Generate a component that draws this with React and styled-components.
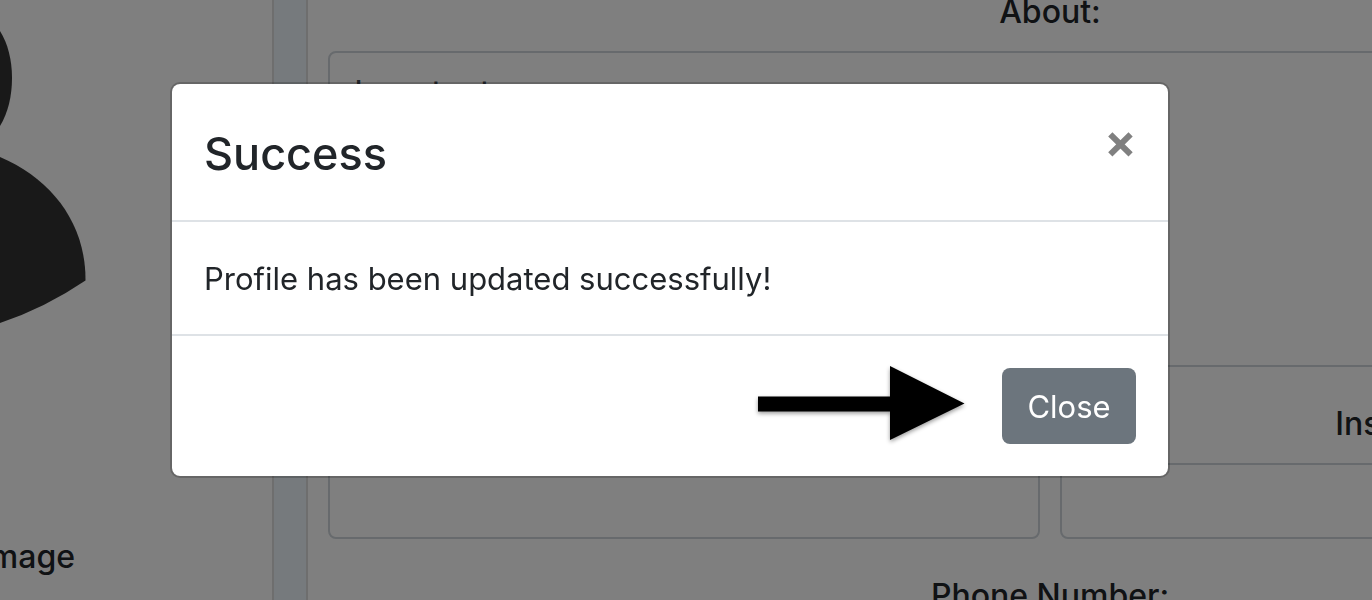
import React from "react";
import styled, { createGlobalStyle } from "styled-components";

const GlobalStyle = createGlobalStyle`
  *, *::before, *::after { box-sizing: border-box; }
  body {
    margin: 0;
    overflow: hidden;
    background: #fff;
    color: #212529;
    font-family: Inter, "Liberation Sans", sans-serif;
    font-size: 31px;
    line-height: 48px;
  }
`;

const Page = styled.div`
  display: flex;
  height: 100vh;
  overflow: hidden;
  background: #ecf4fa;
`;

const Sidebar = styled.aside`
  flex: 0 0 274px;
  background: #fff;
  border-right: 2px solid #dcdcdc;
`;

const Avatar = styled.svg`
  display: block;
  width: 90px;
  height: 330px;
`;

const SidebarLabel = styled.div`
  display: flex;
  justify-content: flex-end;
  width: 75px;
  margin-top: 202px;
  font-size: 32px;
  font-weight: 500;
  line-height: 50px;
  white-space: nowrap;
`;

const Profile = styled.main`
  flex: 0 0 calc(100% + 114px);
  margin-left: 32px;
  padding: 0 20px;
  background: #fff;
  border-left: 2px solid #dcdcdc;
`;

const Field = styled.div`
  flex: 1;
  min-width: 0;
`;

const FieldRow = styled.div`
  display: flex;
  gap: 20px;
`;

const Label = styled.label`
  display: block;
  margin-bottom: 14px;
  font-size: 32px;
  font-weight: 500;
  line-height: 50px;
  text-align: center;
`;

const AboutLabel = styled(Label)`
  margin-top: -13px;
`;

const TextArea = styled.textarea`
  display: block;
  width: 100%;
  height: 316px;
  margin-bottom: 32px;
  padding: 16px 24px;
  border: 2px solid #ced4da;
  border-radius: 8px;
  background: #fff;
  color: #495057;
  font: inherit;
  font-size: 34px;
  resize: none;
`;

const Input = styled.input`
  display: block;
  width: 100%;
  height: 76px;
  margin-bottom: 32px;
  padding: 12px 24px;
  border: 2px solid #ced4da;
  border-radius: 8px;
  background: #fff;
  font: inherit;
`;

const Backdrop = styled.div`
  position: fixed;
  inset: 0;
  display: flex;
  align-items: flex-start;
  padding: 82px 202px 0 170px;
  background: rgba(0, 0, 0, 0.5);
`;

const Dialog = styled.section`
  flex: 1;
  min-width: 0;
  border: 2px solid rgba(0, 0, 0, 0.2);
  border-radius: 10px;
  background: #fff;
  background-clip: padding-box;
`;

const DialogHeader = styled.header`
  display: flex;
  align-items: flex-start;
  justify-content: space-between;
  padding: 34px 32px 30px;
  border-bottom: 2px solid #dee2e6;
`;

const DialogTitle = styled.h4`
  margin: 0;
  font-size: 45px;
  font-weight: 500;
  line-height: 72px;
`;

const CloseIconButton = styled.button`
  display: flex;
  margin: 12px 0 0;
  padding: 0;
  border: 0;
  background: none;
  color: #808080;
`;

const DialogBody = styled.div`
  padding: 33px 32px 31px;
`;

const DialogFooter = styled.footer`
  display: flex;
  align-items: center;
  justify-content: flex-end;
  gap: 36px;
  padding: 32px;
  border-top: 2px solid #dee2e6;
`;

const Arrow = styled.svg`
  overflow: visible;
  filter: drop-shadow(0 2px 2px rgba(0, 0, 0, 0.4));
`;

const CloseButton = styled.button`
  min-width: 134px;
  height: 76px;
  padding: 2px 24px 0;
  border: 0;
  border-radius: 8px;
  background: #6c757d;
  color: #fff;
  font: inherit;
`;

export default function App() {
  return (
    <>
      <GlobalStyle />
      <Page>
        <Sidebar>
          <Avatar viewBox="0 0 90 330" fill="#333" aria-hidden="true">
            <path d="M0 31C8 44 12 60 12 78C12 96 8 113 0 126Z" />
            <path d="M0 157C52 179 86 224 85.500 280.500Q45 308 0 323Z" />
          </Avatar>
          <SidebarLabel>Profile Image</SidebarLabel>
        </Sidebar>
        <Profile>
          <AboutLabel htmlFor="about">About:</AboutLabel>
          <TextArea id="about" defaultValue="I am test user" />
          <FieldRow>
            <Field>
              <Label htmlFor="company">Company:</Label>
              <Input id="company" />
            </Field>
            <Field>
              <Label htmlFor="institution">Institution:</Label>
              <Input id="institution" />
            </Field>
          </FieldRow>
          <Label htmlFor="phone">Phone Number:</Label>
          <Input id="phone" type="tel" />
        </Profile>
      </Page>
      <Backdrop>
        <Dialog role="dialog" aria-modal="true" aria-labelledby="dialog-title">
          <DialogHeader>
            <DialogTitle id="dialog-title">Success</DialogTitle>
            <CloseIconButton aria-label="Dismiss">
              <svg width="30" height="30" viewBox="0 0 30 30" stroke="currentColor" strokeWidth="6">
                <path d="M4.300 4.300L24.600 24.400M24.600 4.300L4.300 24.400" />
              </svg>
            </CloseIconButton>
          </DialogHeader>
          <DialogBody>Profile has been updated successfully!</DialogBody>
          <DialogFooter>
            <Arrow width="208" height="76" viewBox="0 0 208 76" aria-hidden="true">
              <path d="M0 28.500H132V-2L206.500 35.500L132 72V43.500H0Z" />
            </Arrow>
            <CloseButton>Close</CloseButton>
          </DialogFooter>
        </Dialog>
      </Backdrop>
    </>
  );
}
